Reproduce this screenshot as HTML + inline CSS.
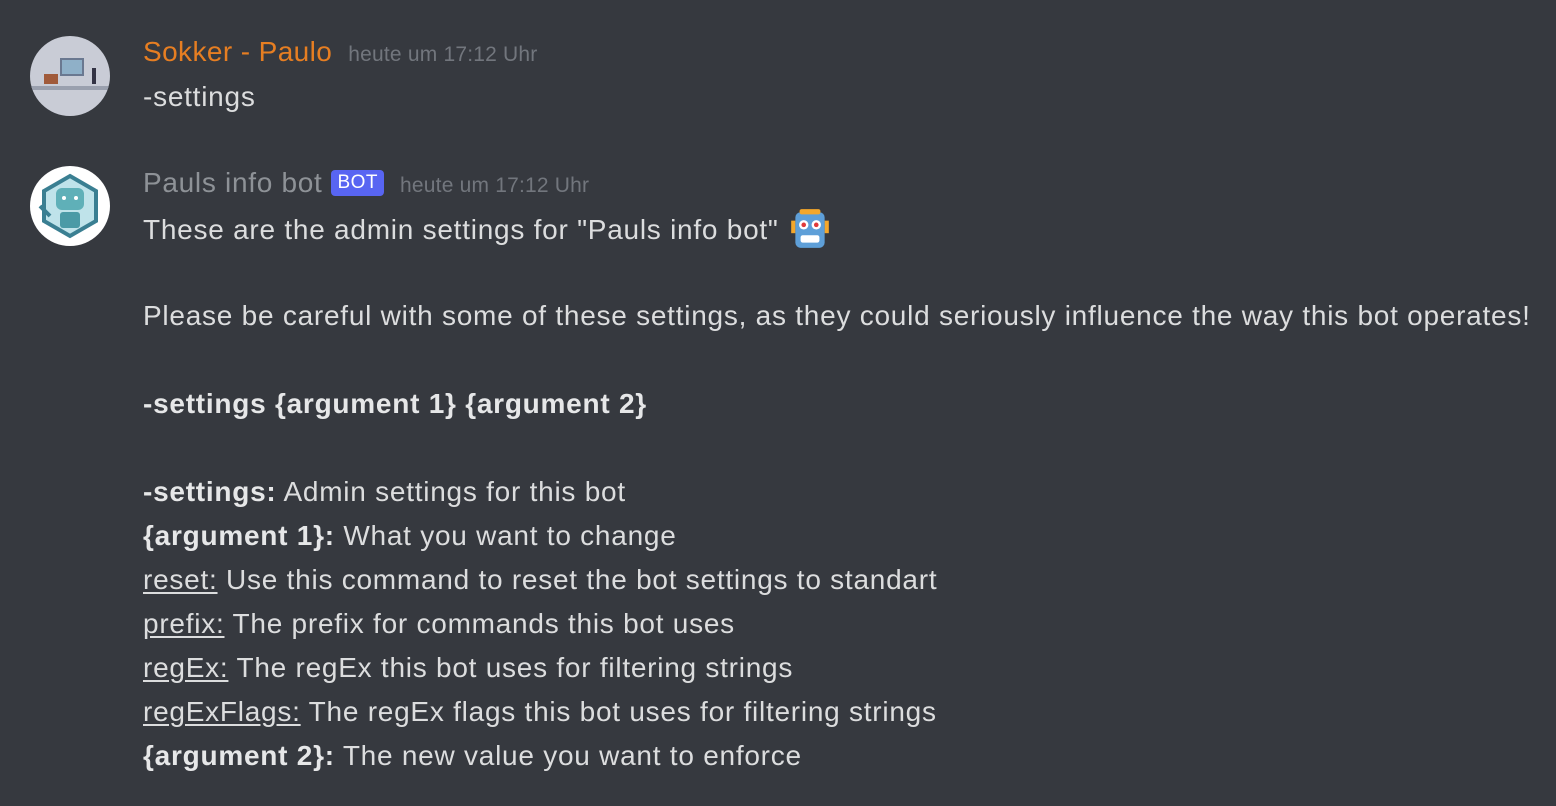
<html><head><style>
body{margin:0;width:1556px;height:806px;background:#36393f;font-family:"Liberation Sans",sans-serif;color:#dcddde;overflow:hidden;position:relative}
.l{position:absolute;left:143px;font-size:28px;line-height:44px;white-space:nowrap;letter-spacing:0.75px}
b{color:#e6e7e8}
u{text-decoration:underline;text-underline-offset:3px}
.av{position:absolute;left:30px;width:80px;height:80px;border-radius:50%}
.ts{font-size:21px;color:#72767d;margin-left:16px;letter-spacing:0.2px}
</style></head><body>
<div class="av" style="top:36px;background:#c9ccd6;overflow:hidden">
<div style="position:absolute;left:0;top:50px;width:80px;height:4px;background:#9aa0ae"></div>
<div style="position:absolute;left:30px;top:22px;width:20px;height:14px;background:#8fb0c8;border:2px solid #6a7890"></div>
<div style="position:absolute;left:14px;top:38px;width:14px;height:10px;background:#a05a3a"></div>
<div style="position:absolute;left:62px;top:32px;width:4px;height:16px;background:#334"></div>
</div>
<div class="l" style="top:30px;color:#e67e22;letter-spacing:0.4px">Sokker - Paulo<span class="ts">heute um 17:12 Uhr</span></div>
<div class="l" style="top:75px">-settings</div>
<div class="av" style="top:166px;background:#fff">
<svg width="80" height="80" viewBox="0 0 80 80"><polygon points="40,10 66,25 66,55 40,70 14,55 14,25" fill="#bfe3ea" stroke="#3a7f92" stroke-width="4"/><rect x="26" y="22" width="28" height="22" rx="6" fill="#5fb0b8"/><circle cx="34" cy="32" r="2" fill="#fff"/><circle cx="46" cy="32" r="2" fill="#fff"/><rect x="30" y="46" width="20" height="16" rx="3" fill="#4a9aa6"/><path d="M10 40 L20 50" stroke="#3a7f92" stroke-width="4"/></svg></div>
<div class="l" style="top:161px;color:#8e9297;letter-spacing:0.7px">Pauls info bot<span style="display:inline-block;background:#5865f2;color:#fff;font-size:19px;line-height:26px;padding:0 6px;border-radius:4px;margin-left:9px;vertical-align:4px;letter-spacing:0.5px">BOT</span><span class="ts">heute um 17:12 Uhr</span></div>
<div class="l" style="top:206px">These are the admin settings for "Pauls info bot" <svg width="46" height="46" viewBox="0 0 44 44" style="vertical-align:-13px"><rect x="4" y="14" width="4" height="12" fill="#f4a72b"/><rect x="36" y="14" width="4" height="12" fill="#f4a72b"/><rect x="8" y="6" width="28" height="34" rx="5" fill="#5e9fd8"/><rect x="12" y="3" width="20" height="5" rx="2" fill="#f4a72b"/><circle cx="16" cy="18" r="4.5" fill="#fff"/><circle cx="28" cy="18" r="4.5" fill="#fff"/><circle cx="16" cy="18" r="2.2" fill="#e03a3a"/><circle cx="28" cy="18" r="2.2" fill="#e03a3a"/><rect x="13" y="28" width="18" height="7" rx="2" fill="#fff"/></svg></div>
<div class="l" style="top:294px">Please be careful with some of these settings, as they could seriously influence the way this bot operates!</div>
<div class="l" style="top:382px"><b>-settings {argument 1} {argument 2}</b></div>
<div class="l" style="top:470px"><b>-settings:</b> Admin settings for this bot</div>
<div class="l" style="top:514px"><b>{argument 1}:</b> What you want to change</div>
<div class="l" style="top:558px"><u>reset:</u> Use this command to reset the bot settings to standart</div>
<div class="l" style="top:602px"><u>prefix:</u> The prefix for commands this bot uses</div>
<div class="l" style="top:646px"><u>regEx:</u> The regEx this bot uses for filtering strings</div>
<div class="l" style="top:690px"><u>regExFlags:</u> The regEx flags this bot uses for filtering strings</div>
<div class="l" style="top:734px"><b>{argument 2}:</b> The new value you want to enforce</div>
</body></html>
